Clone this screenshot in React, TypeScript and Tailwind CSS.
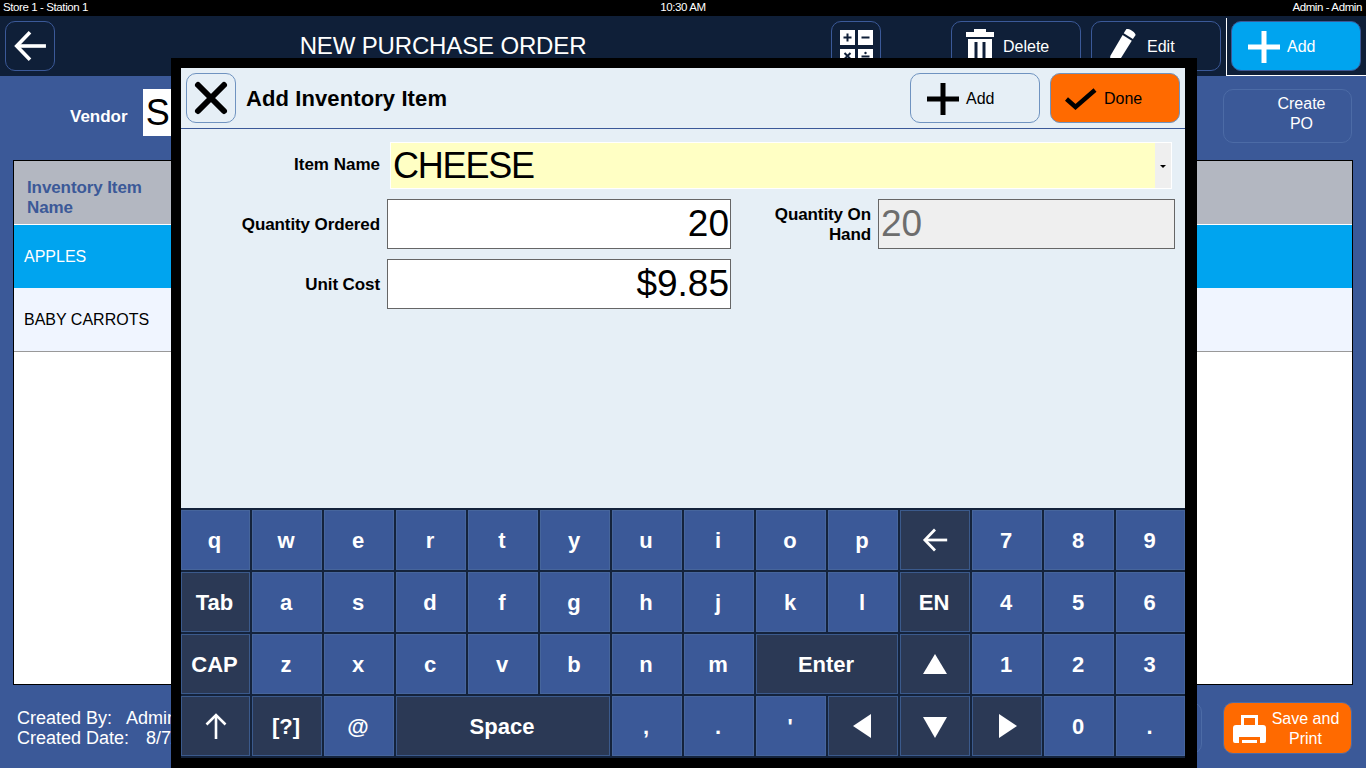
import type { ReactNode } from "react";

const sans = "font-['Liberation_Sans',Arial,sans-serif]";

type Key = { label?: string; icon?: ReactNode; dark?: boolean; span2?: boolean; span3?: boolean };

function Tri({ points }: { points: string }) {
  return (
    <svg width="28" height="28" viewBox="0 0 28 28" fill="#fff">
      <polygon points={points} />
    </svg>
  );
}

function ArrowLeft({ size }: { size: number }) {
  return (
    <svg width={size} height={size} viewBox="0 0 32 32" fill="none" stroke="#fff" strokeWidth="3.4">
      <path d="M31 16H4" />
      <path d="M16 3 3.5 16 16 29" />
    </svg>
  );
}

function Plus({ color, size }: { color: string; size: number }) {
  return (
    <svg width={size} height={size} viewBox="0 0 32 32" fill={color}>
      <rect x="13.5" y="0" width="5" height="32" />
      <rect x="0" y="13.5" width="32" height="5" />
    </svg>
  );
}

const keys: Key[] = [
  ...["q", "w", "e", "r", "t", "y", "u", "i", "o", "p"].map((label) => ({ label })),
  { icon: <ArrowLeft size={26} />, dark: true },
  { label: "7" },
  { label: "8" },
  { label: "9" },
  { label: "Tab", dark: true },
  ...["a", "s", "d", "f", "g", "h", "j", "k", "l"].map((label) => ({ label })),
  { label: "EN", dark: true },
  { label: "4" },
  { label: "5" },
  { label: "6" },
  { label: "CAP", dark: true },
  ...["z", "x", "c", "v", "b", "n", "m"].map((label) => ({ label })),
  { label: "Enter", dark: true, span2: true },
  { icon: <Tri points="14,4 26,24 2,24" />, dark: true },
  { label: "1" },
  { label: "2" },
  { label: "3" },
  {
    icon: (
      <svg width="24" height="28" viewBox="0 0 24 28" fill="none" stroke="#fff" strokeWidth="2.6">
        <path d="M12 27V3" />
        <path d="M2.5 12.5 12 3l9.5 9.5" />
      </svg>
    ),
    dark: true,
  },
  { label: "[?]", dark: true },
  { label: "@" },
  { label: "Space", dark: true, span3: true },
  { label: "," },
  { label: "." },
  { label: "'" },
  { icon: <Tri points="22,2 22,26 4,14" />, dark: true },
  { icon: <Tri points="2,5 26,5 14,26" />, dark: true },
  { icon: <Tri points="6,2 6,26 24,14" />, dark: true },
  { label: "0" },
  { label: "." },
];

function Keyboard() {
  return (
    <div className="grid h-[250px] grid-cols-[69px_repeat(12,70px)_69px] grid-rows-[repeat(4,60px)] gap-[2px] bg-[#14233c] py-[2px]">
      {keys.map((k, i) => (
        <div
          key={i}
          className={`flex items-center justify-center border text-[22px] font-bold text-white ${
            k.dark ? "border-[#3b5a8c] bg-[#2b3955]" : "border-[#46659c] bg-[#3b5998]"
          } ${k.span2 ? "col-span-2" : ""} ${k.span3 ? "col-span-3" : ""} ${k.label ? "pr-[2px]" : ""}`}
        >
          {k.icon ?? k.label}
        </div>
      ))}
    </div>
  );
}

function TopButton({ icon, label, gap }: { icon: ReactNode; label: string; gap: string }) {
  return (
    <button className="flex h-[50px] w-[130px] items-center rounded-[10px] border border-[#3b5998] pt-[2px] pl-[14px] text-[16px] text-white">
      {icon}
      <span className={gap}>{label}</span>
    </button>
  );
}

function AddInventoryModal() {
  return (
    <div className="absolute top-[58px] left-[171px] flex h-[710px] w-[1026px] flex-col border-t-[10px] border-r-[12px] border-b-[10px] border-l-[10px] border-black bg-[#e6eff6]">
      <div className="flex h-[61px] shrink-0 items-center border-b border-[#3b5998] pr-[5px] pl-[5px]">
        <button className="flex h-[50px] w-[50px] items-center justify-center rounded-[10px] border border-[#6f93c0]">
          <svg width="36" height="36" viewBox="0 0 36 36" stroke="#000" strokeWidth="6" strokeLinecap="round">
            <path d="M5 5 31 31M31 5 5 31" />
          </svg>
        </button>
        <h1 className="ml-[10px] text-[22px] font-bold tracking-[0.1px] text-black">Add Inventory Item</h1>
        <button className="ml-auto flex h-[50px] w-[130px] items-center rounded-[10px] border border-[#6f93c0] pt-[2px] pl-[16px] text-[16px] text-black">
          <Plus color="#000" size={32} />
          <span className="ml-[7px]">Add</span>
        </button>
        <button className="ml-[10px] flex h-[50px] w-[130px] items-center rounded-[10px] border border-[#6f93c0] bg-[#ff6a00] pt-[2px] pl-[14px] text-[16px] text-black">
          <svg width="32" height="24" viewBox="0 0 32 24" fill="none" stroke="#000" strokeWidth="4.5">
            <path d="M1.5 12 10.5 20 30 3" />
          </svg>
          <span className="ml-[7px]">Done</span>
        </button>
      </div>

      <div className="flex-1 pt-[13px]">
        <div className="flex items-center">
          <label className="w-[199px] pb-[2px] text-right text-[17px] font-bold text-black">Item Name</label>
          <div className="ml-[10px] flex h-[47px] w-[782px] border border-white">
            <div className="flex flex-1 items-center bg-[#ffffc4] pl-[2px] text-[36px] tracking-[-1.2px] text-black">CHEESE</div>
            <div className="flex w-[16px] items-center justify-center bg-[#efefef]">
              <span className="mt-[2px] border-x-[3px] border-t-[3px] border-x-transparent border-t-black" />
            </div>
          </div>
        </div>
        <div className="mt-[10px] flex items-center">
          <label className="w-[199px] pt-[1px] text-right text-[17px] font-bold tracking-[-0.1px] text-black">Quantity Ordered</label>
          <div className="ml-[7px] flex h-[50px] w-[344px] items-center justify-end border border-[#666] bg-white pr-[1px] text-[37px] text-black">
            20
          </div>
          <label className="w-[140px] pt-[1px] text-right text-[17px] leading-[20px] font-bold tracking-[-0.1px] text-black">
            Quantity On
            <br />
            Hand
          </label>
          <div className="ml-[7px] flex h-[50px] w-[297px] items-center border border-[#666] bg-[#efefef] pl-[2px] text-[37px] text-[#6d6d6d]">
            20
          </div>
        </div>
        <div className="mt-[10px] flex items-center">
          <label className="w-[199px] pt-[1px] text-right text-[17px] font-bold tracking-[-0.1px] text-black">Unit Cost</label>
          <div className="ml-[7px] flex h-[50px] w-[344px] items-center justify-end border border-[#666] bg-white pr-[1px] text-[37px] text-black">
            $9.85
          </div>
        </div>
      </div>

      <Keyboard />
    </div>
  );
}

export default function App() {
  return (
    <div className={`relative flex h-[768px] w-[1366px] flex-col overflow-hidden bg-[#3b5998] ${sans}`}>
      <div className="flex h-[16px] shrink-0 items-center justify-between bg-black px-[3px] text-[11.5px] tracking-[-0.4px] text-white">
        <span className="w-[300px]">Store 1 - Station 1</span>
        <span>10:30 AM</span>
        <span className="w-[300px] pr-[1px] text-right">Admin - Admin</span>
      </div>

      <div className="flex h-[60px] shrink-0 items-center bg-[#0f1f38] pl-[5px]">
        <button className="flex h-[50px] w-[50px] items-center justify-center rounded-[10px] border border-[#3b5998]">
          <ArrowLeft size={34} />
        </button>
        <h2 className="flex-1 text-center text-[24px] tracking-[-0.15px] text-white">NEW PURCHASE ORDER</h2>
        <button className="flex h-[50px] w-[50px] items-start justify-center rounded-[10px] border border-[#3b5998] pt-[8px]">
          <svg width="33" height="34" viewBox="0 0 33 34">
            <rect x="0" y="0" width="15" height="15" fill="#fff" />
            <rect x="18" y="0" width="15" height="15" fill="#fff" />
            <rect x="0" y="19" width="15" height="15" fill="#fff" />
            <rect x="18" y="19" width="15" height="15" fill="#fff" />
            <path d="M3.500 7.500h8M7.500 3.500v8M21.500 7.500h8M4.500 23l6 6M10.500 23l-6 6M21.500 26.500h8" stroke="#0f1f38" strokeWidth="2" />
            <circle cx="25.500" cy="23" r="1.200" fill="#0f1f38" />
            <circle cx="25.500" cy="30" r="1.200" fill="#0f1f38" />
          </svg>
        </button>
        <div className="ml-[70px]">
          <TopButton
            label="Delete"
            gap="ml-[9px]"
            icon={
              <svg width="28" height="36" viewBox="0 0 28 36" fill="#fff">
                <rect x="8" y="0" width="12" height="3" />
                <rect x="0" y="3" width="28" height="5" />
                <path d="M2 10h24v26H2zM8.500 13v20h3V13zM16.500 13v20h3V13z" fillRule="evenodd" />
              </svg>
            }
          />
        </div>
        <div className="ml-[10px]">
          <TopButton
            label="Edit"
            gap="ml-[11px]"
            icon={
              <svg width="30" height="37" viewBox="0 0 30 37" fill="#fff">
                <path d="M20.400.1 22 0c3 .5 7 3.500 7.600 5.900l-2.700 4.200-9.200-5.800z" />
                <path d="M16.600 6l9.200 5.800-13.300 21.100-8.900 3.900.7-9.700z" />
              </svg>
            }
          />
        </div>
        <div className="mt-[2px] ml-[5px] flex h-[58px] w-[140px] items-start border-b border-l border-white pt-[3px] pl-[4px]">
          <button className="flex h-[50px] w-[130px] items-center rounded-[10px] border border-[#3b5998] bg-[#00a4ef] pt-[2px] pl-[16px] text-[16px] text-white">
            <Plus color="#fff" size={32} />
            <span className="ml-[7px]">Add</span>
          </button>
        </div>
      </div>

      <div className="flex h-[84px] shrink-0 items-start pr-[14px] pl-[70px]">
        <span className="mt-[28px] text-[17px] font-bold text-white">Vendor</span>
        <div className="mt-[13px] ml-[15px] flex h-[47px] w-[700px] items-center bg-white pl-[3px] text-[36px] text-black">S</div>
        <button className="mt-[13px] ml-auto h-[54px] w-[129px] rounded-[10px] border border-[#4c6ba6] pb-[4px] pl-[28px] text-[16px] leading-[20px] text-white">
          Create
          <br />
          PO
        </button>
      </div>

      <div className="mx-[13px] h-[525px] shrink-0 border border-black bg-white">
        <div className="flex h-[63px] items-center border-t border-[#b3b7c1] bg-[#b3b7c1] pt-[10px] pl-[13px] text-[17px] leading-[20px] font-bold tracking-[-0.1px] text-[#3b5998]">
          Inventory Item
          <br />
          Name
        </div>
        <div className="flex h-[64px] items-center border-t border-white bg-[#00a4ef] pl-[10px] text-[16px] text-white">APPLES</div>
        <div className="flex h-[64px] items-center border-b border-[#999] bg-[#f0f5ff] pt-[1px] pl-[10px] text-[16px] text-black">BABY CARROTS</div>
      </div>

      <div className="flex flex-1 items-start pr-[14px] pl-[17px]">
        <div className="mt-[23px] text-[18px] leading-[20px] text-white">
          <div>
            Created By:<span className="ml-[14px]">Admin</span>
          </div>
          <div>
            Created Date:<span className="ml-[17px]">8/7/</span>
          </div>
        </div>
        <button className="mt-[17px] ml-auto h-[52px] w-[130px] rounded-[10px] border border-[#4c6ba6]" aria-hidden="true" />
        <button className="mt-[17px] ml-[21px] flex h-[52px] w-[129px] items-center rounded-[10px] border border-[#4c6ba6] bg-[#ff6a00] pt-[2px] pr-[6px] pl-[9px] text-[16px] leading-[20px] text-white">
          <svg width="33" height="29" viewBox="0 0 33 29" fill="#fff">
            <path d="M8 0h17v11h-3V3H11v8H8z" />
            <path d="M3 10h27a3 3 0 0 1 3 3v13a2 2 0 0 1-2 2h-4v-6H6v6H2a2 2 0 0 1-2-2V13a3 3 0 0 1 3-3z" />
            <rect x="9" y="25" width="15" height="3" />
          </svg>
          <span className="flex-1 text-center">
            Save and
            <br />
            Print
          </span>
        </button>
      </div>

      <AddInventoryModal />
    </div>
  );
}
